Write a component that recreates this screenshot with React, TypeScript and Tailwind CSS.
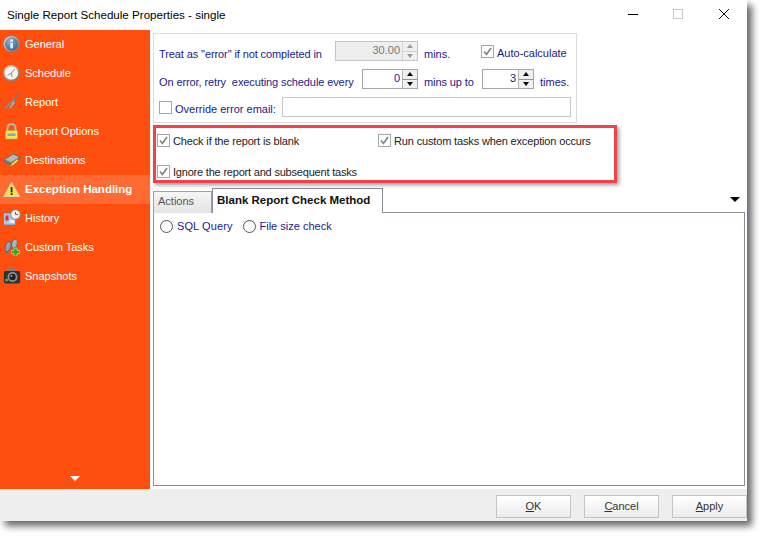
import type { ReactNode } from "react";

const navItems = ["General", "Schedule", "Report", "Report Options", "Destinations", "Exception Handling", "History", "Custom Tasks", "Snapshots"];

function NavIcon({ index }: { index: number }) {
  return (
    <svg width="18" height="18" viewBox="0 0 18 18" className="shrink-0">
      <defs>
        <radialGradient id="infoFill" cx="0.4" cy="0.3" r="0.8">
          <stop offset="0" stopColor="#8fb2d8" />
          <stop offset="1" stopColor="#2f5f9a" />
        </radialGradient>
        <linearGradient id="ringFill" x1="0" y1="0" x2="1" y2="1">
          <stop offset="0" stopColor="#d6dadd" />
          <stop offset="1" stopColor="#666c72" />
        </linearGradient>
      </defs>
      {index === 0 && (
        <>
          <circle cx="8.5" cy="9" r="8" fill="url(#ringFill)" />
          <circle cx="8.5" cy="9" r="6.4" fill="url(#infoFill)" />
          <rect x="7.4" y="8" width="2.4" height="5.4" fill="#fff" />
          <rect x="7.4" y="4.4" width="2.4" height="2.2" fill="#fff" />
        </>
      )}
      {index === 1 && (
        <>
          <circle cx="8.5" cy="9" r="8" fill="url(#ringFill)" />
          <circle cx="8.5" cy="9" r="6.6" fill="#f5f3ee" />
          <path d="M8.5 9 L12 5 M8.5 9 L4.5 11.5 M8.5 9 L9 13" stroke="#777" strokeWidth="0.8" fill="none" />
        </>
      )}
      {index === 2 && (
        <>
          <path d="M15.5 1 L1 15.5 L2.5 16 L11 7.5 Z" fill="#9aa0a8" stroke="#666c74" strokeWidth="0.5" />
          <path d="M15.5 1 L11 7.5 L12 10 L7 16 L6 15 L10 8.5 Z" fill="#b4b9c0" stroke="#666c74" strokeWidth="0.5" />
        </>
      )}
      {index === 3 && (
        <>
          <path d="M4.5 9 V6 a4 4 0 0 1 8 0 V9" stroke="#b9bab0" strokeWidth="2" fill="none" />
          <rect x="2.5" y="8.5" width="12" height="8.5" rx="1" fill="#f0e36c" stroke="#b8a93a" strokeWidth="0.6" />
          <rect x="4.5" y="11.5" width="8" height="2.5" fill="#98a6a0" />
        </>
      )}
      {index === 4 && (
        <>
          <path d="M1 9 L10 3 L17 6 L8 12 Z" fill="#b4b8bb" stroke="#55595c" strokeWidth="0.7" />
          <path d="M1 9 V11 L8 14 L17 8 V6 L8 12 Z" fill="#7d8184" stroke="#55595c" strokeWidth="0.5" />
          <path d="M7 16 L9 12 L14 8 L15.5 9.5 L10.5 14 Z" fill="#efd84e" stroke="#8a7a20" strokeWidth="0.5" />
        </>
      )}
      {index === 5 && (
        <>
          <path d="M8.5 1.5 L16.5 15.5 H0.8 Z" fill="#f8e33e" stroke="#d9d8b8" strokeWidth="1" strokeLinejoin="round" />
          <rect x="7.7" y="6" width="1.8" height="5.4" fill="#2a2a10" />
          <rect x="7.7" y="12.2" width="1.8" height="1.8" fill="#2a2a10" />
        </>
      )}
      {index === 6 && (
        <>
          <rect x="0.5" y="4" width="12" height="12" fill="#a8c8e8" stroke="#5c7fa8" strokeWidth="0.8" />
          <rect x="2.5" y="6.5" width="3" height="5" fill="#d2392b" />
          <rect x="6.5" y="11" width="5" height="3" fill="#e7eff7" />
          <circle cx="12.5" cy="5.5" r="4.8" fill="#eef0f2" stroke="#7a8087" strokeWidth="1" />
          <path d="M12.5 3 V5.5 H15" stroke="#444" strokeWidth="0.8" fill="none" />
        </>
      )}
      {index === 7 && (
        <>
          <ellipse cx="5" cy="8.5" rx="2.8" ry="5.2" fill="#9a9fa5" stroke="#4e5359" strokeWidth="0.7" transform="rotate(15 5 8.5)" />
          <ellipse cx="11.5" cy="5.5" rx="2.8" ry="4.6" fill="#aeb3b9" stroke="#4e5359" strokeWidth="0.7" transform="rotate(15 11.5 5.5)" />
          <rect x="1.6" y="14" width="3.8" height="2.6" rx="1" fill="#767b81" />
          <path d="M11 10 h3 v2.5 h2.7 v3 h-2.7 v2.5 h-3 v-2.5 h-2.7 v-3 h2.7 z" fill="#35a81e" stroke="#e5f5df" strokeWidth="0.5" />
        </>
      )}
      {index === 8 && (
        <>
          <rect x="5" y="1.5" width="8" height="3.5" rx="1" fill="#7c8083" />
          <rect x="0.8" y="4" width="16.4" height="12.5" rx="2" fill="#303234" />
          <circle cx="9.5" cy="10" r="5" fill="#8d9195" />
          <circle cx="9.5" cy="10" r="3.2" fill="#1c1e20" />
          <circle cx="8.5" cy="9" r="0.9" fill="#aeb4ba" />
          <circle cx="3.6" cy="13" r="1.6" fill="#3bb53b" />
        </>
      )}
    </svg>
  );
}

function CheckBox({ checked = true }: { checked?: boolean }) {
  return (
    <span className="w-[13px] h-[13px] shrink-0 border border-[#a6a6a6] bg-white flex items-center justify-center">
      {checked && (
        <svg width="9" height="9" viewBox="0 0 9 9">
          <path d="M1 4.5 L3.4 7.5 L8 1" stroke="#808080" strokeWidth="1.6" fill="none" />
        </svg>
      )}
    </span>
  );
}

function Radio() {
  return <span className="w-[13px] h-[13px] shrink-0 rounded-full border border-[#555] bg-white" />;
}

function Spinner({ value, width, disabled }: { value: string; width: string; disabled?: boolean }) {
  return (
    <div className={`${width} h-5 border flex ${disabled ? "border-[#c4c4c4] bg-[#eeeeee]" : "border-[#a6a6a6] bg-white"}`}>
      <span className={`flex-1 text-right pr-[2px] leading-[17px] ${disabled ? "text-[#777]" : "text-[#1a1a8c]"}`}>{value}</span>
      <div className={`w-[15px] flex flex-col border-l ${disabled ? "border-[#d4d4d4]" : "border-[#b4b4b4]"}`}>
        <span className={`flex-1 bg-[#f0f0f0] flex items-center justify-center border-b ${disabled ? "border-[#d0d0d0]" : "border-[#909090]"}`}>
          <span className={`w-0 h-0 border-x-[3.5px] border-x-transparent border-b-[4px] ${disabled ? "border-b-[#999]" : "border-b-black"}`} />
        </span>
        <span className="flex-1 bg-[#f0f0f0] flex items-center justify-center">
          <span className={`w-0 h-0 border-x-[3.5px] border-x-transparent border-t-[4px] ${disabled ? "border-t-[#999]" : "border-t-black"}`} />
        </span>
      </div>
    </div>
  );
}

function Label({ children, className = "" }: { children: ReactNode; className?: string }) {
  return <span className={`text-[#1a1a8c] whitespace-pre ${className}`}>{children}</span>;
}

function DialogButton({ mnemonic, rest }: { mnemonic: string; rest: string }) {
  return (
    <button className="w-[75px] h-[23px] border border-[#c4c4c4] bg-gradient-to-b from-white to-[#ececf0] text-[#333] text-[11px]">
      <span className="underline">{mnemonic}</span>
      {rest}
    </button>
  );
}

export default function App() {
  return (
    <div className="w-[762px] h-[536px] bg-white overflow-hidden text-[11px] font-['Liberation_Sans',sans-serif]">
      <div className="w-[747px] h-[521px] flex flex-col shadow-[5px_5px_7px_rgba(0,0,0,0.6)] bg-white">
        {/* title bar */}
        <div className="h-[30px] flex items-center pl-[7px] text-black">
          <span className="flex-1 pb-[1px] text-[11.6px]">Single Report Schedule Properties - single</span>
          <span className="w-[10px] h-px bg-black mr-[35px] -mt-[2px]" />
          <span className="w-[10px] h-[10px] border border-[#c8c8c8] mr-[36px] -mt-[2px]" />
          <svg width="10" height="10" viewBox="0 0 10 10" className="mr-[18px] -mt-[2px]">
            <path d="M0 0 L10 10 M10 0 L0 10" stroke="#111" strokeWidth="1" />
          </svg>
        </div>

        <div className="h-[459px] flex">
          {/* sidebar */}
          <div className="w-[150px] bg-[#ff4f0f] flex flex-col text-white">
            {navItems.map((item, i) => (
              <div key={item} className={`h-[29px] flex items-center pl-[3px] gap-[4px] ${i === 5 ? "bg-[#ff6a33] font-bold text-[11.5px]" : "pb-[1px]"}`}>
                <NavIcon index={i} />
                <span className="whitespace-nowrap">{item}</span>
              </div>
            ))}
            <div className="mt-auto pb-[8px] flex justify-center">
              <span className="w-0 h-0 border-x-[5px] border-x-transparent border-t-[5px] border-t-white" />
            </div>
          </div>

          {/* content */}
          <div className="flex-1 pl-[3px] pt-[3px] flex flex-col">
            <div className="w-[424px] h-[90px] border border-[#dcdcdc] pl-[5px] pt-[7px] flex flex-col gap-2">
              <div className="flex items-center h-5">
                <Label className="w-[176px] pt-[6px] tracking-[-0.1px]">Treat as "error" if not completed in</Label>
                <Spinner value="30.00" width="w-[83px]" disabled />
                <Label className="w-[63px] pl-[6px] pt-[6px]">mins.</Label>
                <CheckBox />
                <Label className="ml-[3px] pt-[5px]">Auto-calculate</Label>
              </div>
              <div className="flex items-center h-5">
                <Label className="w-[203px] pt-[6px] tracking-[-0.1px]">On error, retry  executing schedule every</Label>
                <Spinner value="0" width="w-[56px]" />
                <Label className="w-[64px] pl-[6px] pt-[6px] tracking-[-0.1px]">mins up to</Label>
                <Spinner value="3" width="w-[52px]" />
                <Label className="pl-[6px] pt-[6px]">times.</Label>
              </div>
              <div className="flex items-center h-5">
                <CheckBox checked={false} />
                <Label className="w-[107px] ml-[3px] pt-[4px]">Override error email:</Label>
                <div className="w-[289px] h-5 border border-[#c8c8c8] bg-white" />
              </div>
            </div>

            <div className="mt-[2px] w-[464px] h-[58px] border-[3px] border-[#f0424a] shadow-[2px_2px_4px_rgba(0,0,0,0.4)] pl-[1px] pt-[6px] grid grid-cols-[221px_1fr] grid-rows-[13px_13px] gap-y-[18px] text-[#222]">
              <div className="flex items-center gap-[3px]">
                <CheckBox />
                <span className="whitespace-nowrap tracking-[-0.15px] pt-[2px]">Check if the report is blank</span>
              </div>
              <div className="flex items-center gap-[3px]">
                <CheckBox />
                <span className="whitespace-nowrap tracking-[-0.15px] pt-[2px]">Run custom tasks when exception occurs</span>
              </div>
              <div className="flex items-center gap-[3px] col-span-2">
                <CheckBox />
                <span className="whitespace-nowrap tracking-[-0.2px] pt-[2px]">Ignore the report and subsequent tasks</span>
              </div>
            </div>

            {/* tabs */}
            <div className="mt-[5px] w-[592px] h-[25px] flex items-end relative z-10 -mb-px">
              <div className="w-[59px] h-[22px] border border-[#a0a0a8] border-b-0 bg-gradient-to-b from-[#f6f6f6] to-[#e4e4e4] text-[#555] flex items-center pl-[4px] pb-[2px]">Actions</div>
              <div className="w-[171px] h-[25px] border border-[#8a8a98] border-b-0 bg-white font-bold text-[11.5px] text-[#111] flex items-center pl-[4px]">Blank Report Check Method</div>
              <span className="absolute right-[5px] top-[9px] w-0 h-0 border-x-[5px] border-x-transparent border-t-[5px] border-t-black" />
            </div>
            <div className="w-[592px] h-[274px] border border-[#8a8a98] bg-white pl-[6px] pt-[7px] text-[#1a1a8c]">
              <div className="flex items-center h-[13px] gap-[4px]">
                <Radio />
                <span className="tracking-[0.1px]">SQL Query</span>
                <span className="w-[2px]" />
                <Radio />
                <span>File size check</span>
              </div>
            </div>
          </div>
        </div>

        {/* footer */}
        <div className="h-[32px] bg-[#eeeeee] flex justify-end gap-[13px] pt-[6px]">
          <DialogButton mnemonic="O" rest="K" />
          <DialogButton mnemonic="C" rest="ancel" />
          <DialogButton mnemonic="A" rest="pply" />
        </div>
      </div>
    </div>
  );
}
